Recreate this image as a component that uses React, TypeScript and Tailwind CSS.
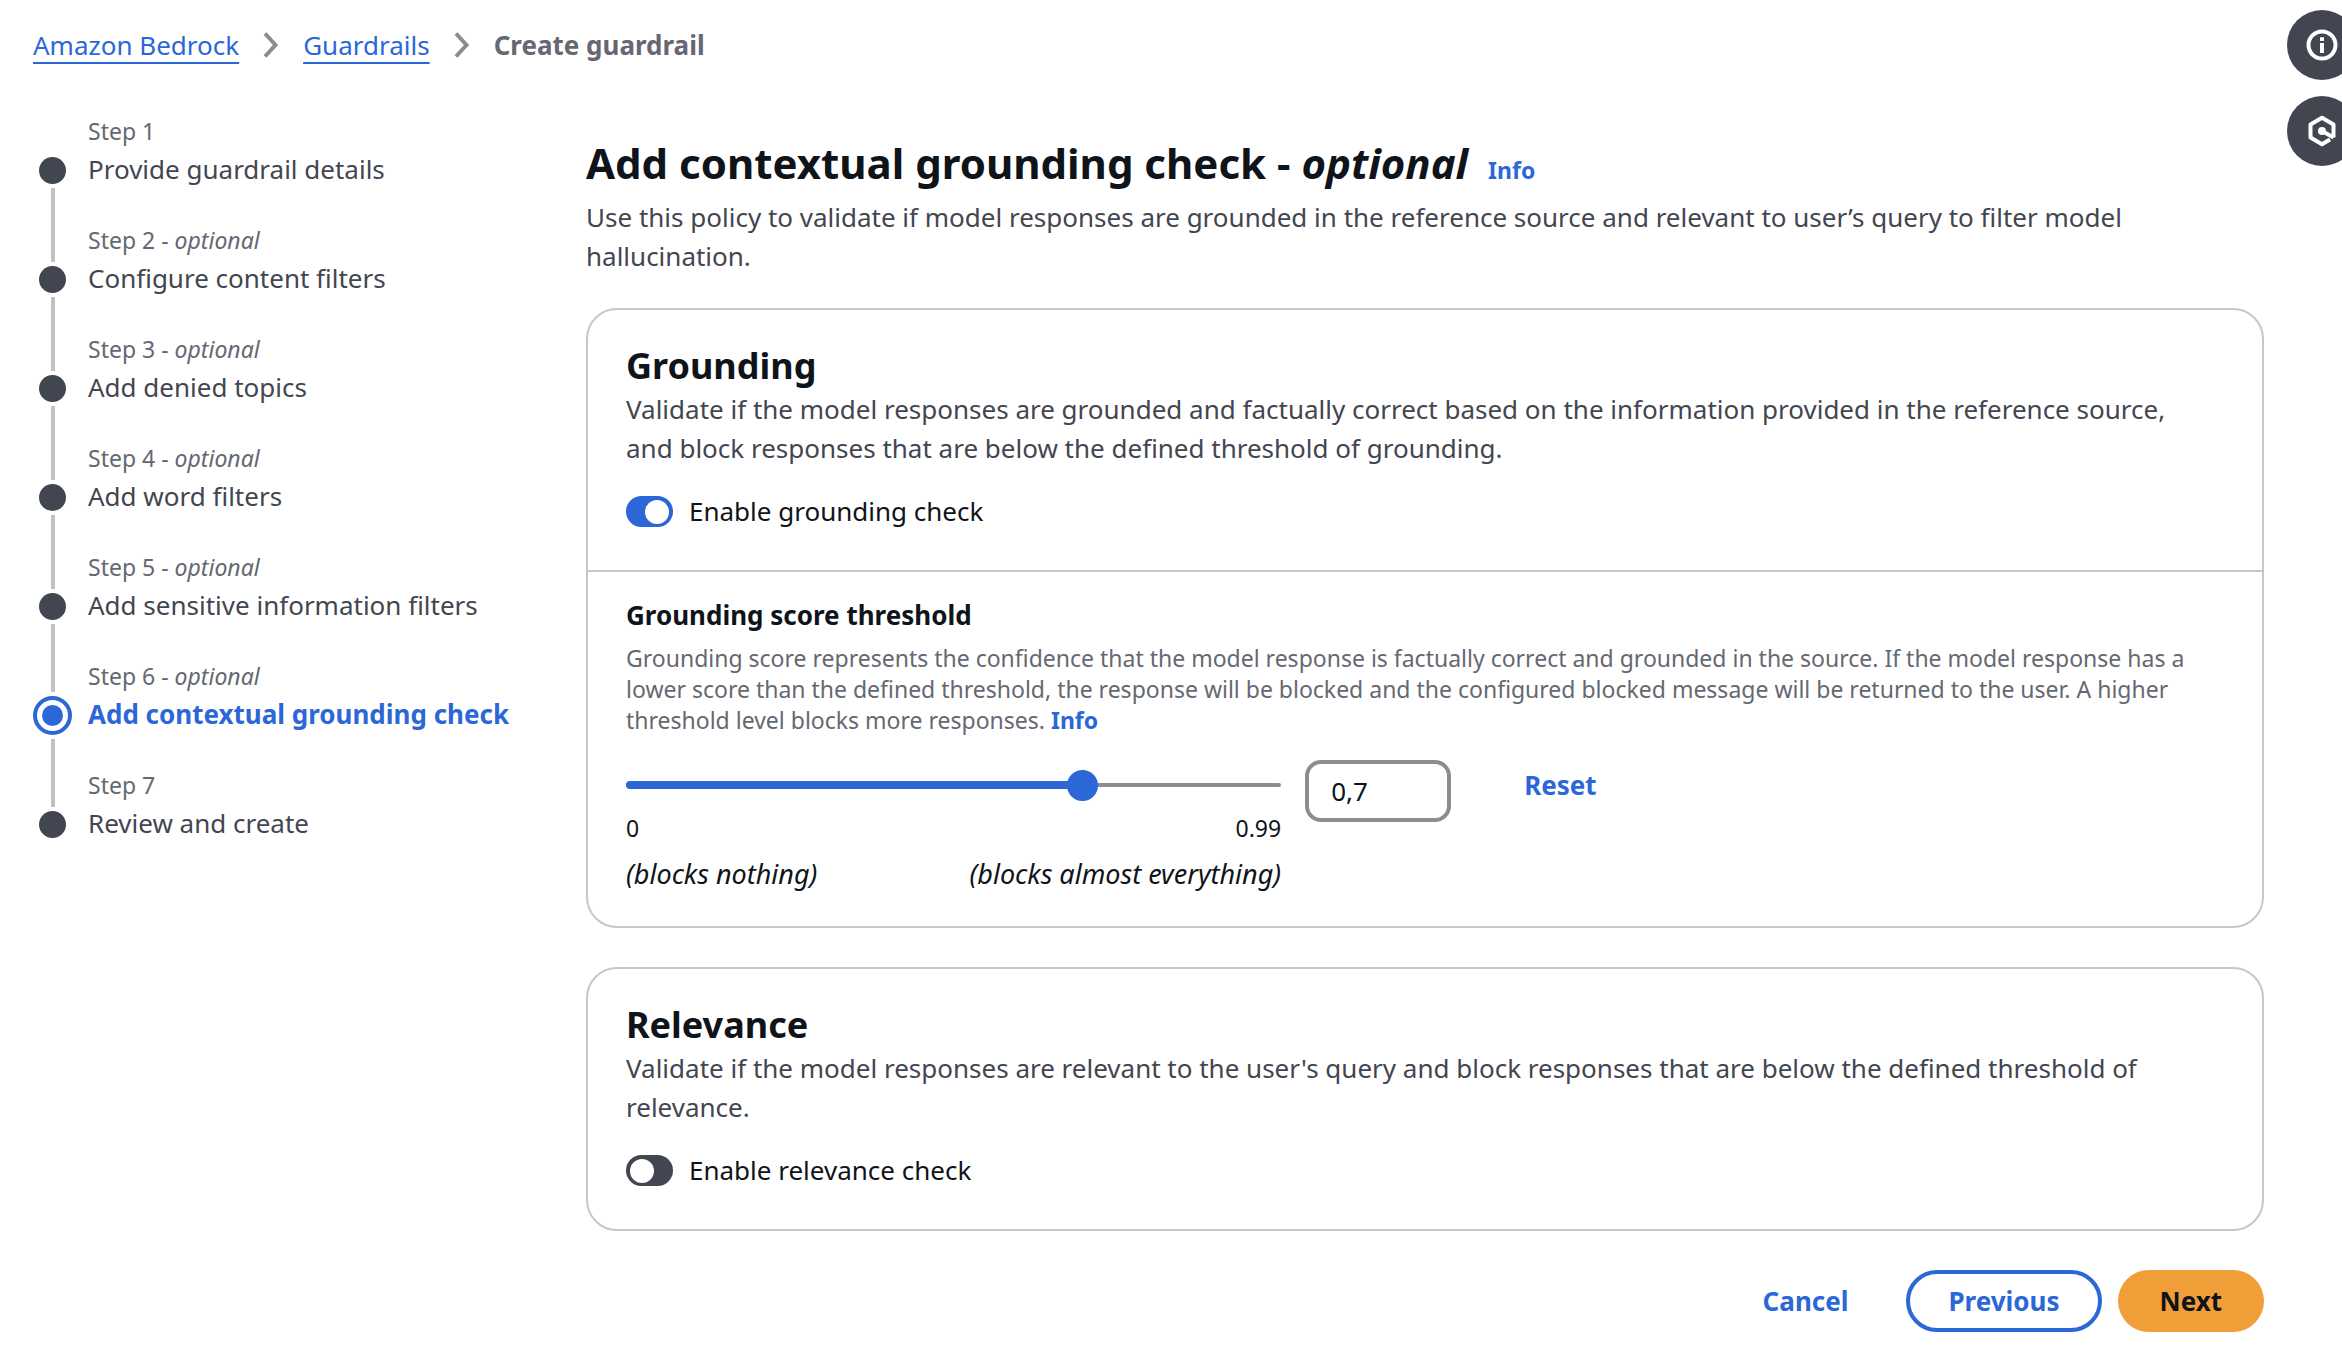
import { useState } from "react";
import type { ReactNode } from "react";

type Step = { label: string; optional: boolean; title: string };

const steps: Step[] = [
  { label: "Step 1", optional: false, title: "Provide guardrail details" },
  { label: "Step 2", optional: true, title: "Configure content filters" },
  { label: "Step 3", optional: true, title: "Add denied topics" },
  { label: "Step 4", optional: true, title: "Add word filters" },
  { label: "Step 5", optional: true, title: "Add sensitive information filters" },
  { label: "Step 6", optional: true, title: "Add contextual grounding check" },
  { label: "Step 7", optional: false, title: "Review and create" },
];

const ACTIVE_STEP = 5;
const MAX_SCORE = 0.99;

function Chevron() {
  return (
    <svg viewBox="0 0 16 26" className="h-[26px] w-4" fill="none" stroke="#8c8c94" strokeWidth="4" aria-hidden="true">
      <path d="M2 1.5 L12.5 13 L2 24.5" />
    </svg>
  );
}

function Breadcrumbs() {
  const link =
    "text-[#2b67d6] underline decoration-2 underline-offset-[7px]";
  return (
    <nav aria-label="Breadcrumbs" className="pt-[26px] pb-12">
      <ol className="flex items-center gap-6 leading-[38px]">
        <li><a href="#bedrock" className={link}>Amazon Bedrock</a></li>
        <li><Chevron /></li>
        <li><a href="#guardrails" className={link}>Guardrails</a></li>
        <li><Chevron /></li>
        <li className="font-bold text-[#656871]" aria-current="page">Create guardrail</li>
      </ol>
    </nav>
  );
}

function StepItem({ step, index }: { step: Step; index: number }) {
  const active = index === ACTIVE_STEP;
  const last = index === steps.length - 1;
  return (
    <li className="flex h-[109px] gap-4" aria-current={active ? "step" : undefined}>
      <div className="flex w-[39px] flex-none flex-col items-center gap-1">
        <span
          className={`w-1 flex-none ${active ? "h-[35px]" : "h-[41px]"} ${index === 0 ? "" : "bg-[#c0c0c7]"}`}
        />
        {active ? (
          <span className="flex size-[39px] flex-none items-center justify-center rounded-full border-4 border-[#2b67d6]">
            <span className="size-[21px] rounded-full bg-[#2b67d6]" />
          </span>
        ) : (
          <span className="size-[27px] flex-none rounded-full bg-[#424650]" />
        )}
        <span className={`w-1 flex-1 ${last ? "" : "bg-[#c0c0c7]"}`} />
      </div>
      <div className="leading-[38px]">
        <div className="text-[23px] text-[#656871]">
          {step.label}
          {step.optional && <> - <i>optional</i></>}
        </div>
        {active ? (
          <div className="font-bold text-[#2b67d6]">{step.title}</div>
        ) : (
          <a href={`#step-${index + 1}`} className="text-[#424650]">{step.title}</a>
        )}
      </div>
    </li>
  );
}

function Toggle({ id, label, initial }: { id: string; label: string; initial: boolean }) {
  const [on, setOn] = useState(initial);
  return (
    <div className="mt-6 flex h-[39px] items-center gap-4">
      <input
        id={id}
        type="checkbox"
        role="switch"
        checked={on}
        onChange={(e) => setOn(e.target.checked)}
        className="flex h-[31px] w-[47px] flex-none appearance-none items-center rounded-full bg-[#424650] px-1 before:size-6 before:rounded-full before:bg-white before:content-[''] checked:justify-end checked:bg-[#2b67d6]"
      />
      <label htmlFor={id} className="text-[#0f141a]">{label}</label>
    </div>
  );
}

function Card({ children }: { children: ReactNode }) {
  return <section className="rounded-[31px] border-2 border-[#c6c6cd]">{children}</section>;
}

function CardHeader({ title, text, children }: { title: string; text: string; children: ReactNode }) {
  return (
    <div className="px-[38px] pt-8 pb-[39px]">
      <h2 className="text-[36px] leading-[48px] font-bold text-[#0f141a]">{title}</h2>
      <p className="pr-8 text-[#424650]">{text}</p>
      {children}
    </div>
  );
}

function ThresholdField() {
  const [score, setScore] = useState(0.7);
  const filled = (score / MAX_SCORE) * 100;
  return (
    <div className="border-t-2 border-[#c6c6cd] px-[38px] pt-6 pb-[33px]">
      <label htmlFor="grounding-score" className="block font-bold text-[#0f141a]">
        Grounding score threshold
      </label>
      <p className="mt-2 text-[23px] leading-[31px] text-[#656871]">
        Grounding score represents the confidence that the model response is factually correct and
        grounded in the source. If the model response has a lower score than the defined threshold,
        the response will be blocked and the configured blocked message will be returned to the
        user. A higher threshold level blocks more responses.{" "}
        <a href="#threshold-info" className="font-bold text-[#2b67d6]">Info</a>
      </p>
      <div className="mt-6 flex items-start">
        <div className="w-[41%]">
          <div className="relative flex h-[50px] items-center">
            <div className="h-1 w-full rounded-full bg-[#8c8c94]" />
            <div className="absolute left-0 h-2 rounded-full bg-[#2b67d6]" style={{ width: `${filled}%` }} />
            <input
              id="grounding-score"
              type="range"
              min={0}
              max={MAX_SCORE}
              step={0.01}
              value={score}
              onChange={(e) => setScore(Number(e.target.value))}
              className="absolute inset-0 w-full appearance-none bg-transparent [&::-webkit-slider-thumb]:size-[31px] [&::-webkit-slider-thumb]:appearance-none [&::-webkit-slider-thumb]:rounded-full [&::-webkit-slider-thumb]:bg-[#2b67d6]"
            />
          </div>
          <div className="flex justify-between text-[23px] leading-9 text-[#0f141a]">
            <span>0</span>
            <span>0.99</span>
          </div>
          <div className="mt-2 flex justify-between text-[27px] text-[#0f141a] italic">
            <span>(blocks nothing)</span>
            <span>(blocks almost everything)</span>
          </div>
        </div>
        <input
          type="text"
          inputMode="decimal"
          aria-label="Grounding score"
          value={String(score).replace(".", ",")}
          onChange={(e) => {
            const n = Number(e.target.value.replace(",", "."));
            if (!Number.isNaN(n)) setScore(Math.min(MAX_SCORE, Math.max(0, n)));
          }}
          className="ml-6 h-[62px] w-[146px] rounded-2xl border-4 border-[#8c8c94] px-[22px] text-[#0f141a]"
        />
        <button type="button" onClick={() => setScore(0.7)} className="ml-8 h-[50px] px-[41px] font-bold text-[#2b67d6]">
          Reset
        </button>
      </div>
    </div>
  );
}

function PanelButtons() {
  const button = "flex size-[70px] flex-none items-center justify-center rounded-full bg-[#424650]";
  return (
    <aside className="flex w-[55px] flex-none flex-col gap-4 overflow-hidden pt-[10px]">
      <button type="button" aria-label="Open help panel" className={button}>
        <svg viewBox="0 0 32 32" className="size-8" fill="none" stroke="white" strokeWidth="4">
          <circle cx="16" cy="16" r="13.5" />
          <path d="M16 8.2 V12 M16 14 V24" />
        </svg>
      </button>
      <button type="button" aria-label="Open assistant panel" className={button}>
        <svg viewBox="0 0 32 32" className="size-8" fill="none" stroke="white" strokeWidth="4" strokeLinejoin="round">
          <path d="M27.5 22.5 V9.5 L16 2.8 L4.5 9.5 V22.5 L16 29.2 L24 24.6" />
          <circle cx="16" cy="16" r="4" fill="white" stroke="none" />
          <path d="M16 16 L27.5 22.5" />
        </svg>
      </button>
    </aside>
  );
}

export default function App() {
  return (
    <div className="flex min-h-screen bg-white font-['Noto_Sans',sans-serif] text-[26px] leading-[39px]">
      <div className="min-w-0 flex-1 pr-[23px] pl-[33px]">
        <Breadcrumbs />
        <div className="flex">
          <nav aria-label="Steps" className="w-[553px] flex-none">
            <ol>
              {steps.map((step, i) => (
                <StepItem key={step.title} step={step} index={i} />
              ))}
            </ol>
          </nav>
          <main className="min-w-0 flex-1 pt-[23px]">
            <h1 className="text-[42px] leading-[56px] font-bold text-[#0f141a]">
              Add contextual grounding check - <i>optional</i>
              <a href="#info" className="ml-5 text-[23px] text-[#2b67d6]">Info</a>
            </h1>
            <p className="text-[#424650]">
              Use this policy to validate if model responses are grounded in the reference source and
              relevant to user’s query to filter model hallucination.
            </p>
            <div className="mt-8 flex flex-col gap-[39px]">
              <Card>
                <CardHeader
                  title="Grounding"
                  text="Validate if the model responses are grounded and factually correct based on the information provided in the reference source, and block responses that are below the defined threshold of grounding."
                >
                  <Toggle id="enable-grounding" label="Enable grounding check" initial={true} />
                </CardHeader>
                <ThresholdField />
              </Card>
              <Card>
                <CardHeader
                  title="Relevance"
                  text="Validate if the model responses are relevant to the user's query and block responses that are below the defined threshold of relevance."
                >
                  <Toggle id="enable-relevance" label="Enable relevance check" initial={false} />
                </CardHeader>
              </Card>
              <div className="flex justify-end gap-4 font-bold">
                <button type="button" className="h-[62px] px-[42px] text-[#2b67d6]">Cancel</button>
                <button type="button" className="h-[62px] rounded-full border-4 border-[#2b67d6] px-[38px] text-[#2b67d6]">
                  Previous
                </button>
                <button type="button" className="h-[62px] rounded-full bg-[#f09e38] px-[42px] text-[#0f141a]">Next</button>
              </div>
            </div>
          </main>
        </div>
      </div>
      <PanelButtons />
    </div>
  );
}
